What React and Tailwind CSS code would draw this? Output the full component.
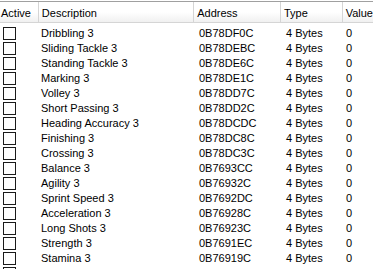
const rows = [
  ["Dribbling 3", "0B78DF0C"],
  ["Sliding Tackle 3", "0B78DEBC"],
  ["Standing Tackle 3", "0B78DE6C"],
  ["Marking 3", "0B78DE1C"],
  ["Volley 3", "0B78DD7C"],
  ["Short Passing 3", "0B78DD2C"],
  ["Heading Accuracy 3", "0B78DCDC"],
  ["Finishing 3", "0B78DC8C"],
  ["Crossing 3", "0B78DC3C"],
  ["Balance 3", "0B7693CC"],
  ["Agility 3", "0B76932C"],
  ["Sprint Speed 3", "0B7692DC"],
  ["Acceleration 3", "0B76928C"],
  ["Long Shots 3", "0B76923C"],
  ["Strength 3", "0B7691EC"],
  ["Stamina 3", "0B76919C"],
];

function HeaderCell({ w, children, last }) {
  return (
    <div
      className={`${w} h-full flex items-center pl-[3px] pt-[3px] ${last ? "" : "border-r border-[#d5d5d5]"}`}
    >
      {children}
    </div>
  );
}

function CheckBox() {
  return (
    <div className="w-[39px] pl-[3px] pt-[1px]">
      <div className="w-[13px] h-[13px] border border-[#1a1a1a] bg-white" />
    </div>
  );
}

export default function App() {
  return (
    <div
      className="w-[373px] h-[269px] bg-white overflow-hidden text-[11px] text-black"
      style={{ fontFamily: "'Liberation Sans', Arial, sans-serif" }}
    >
      {/* top edge */}
      <div className="h-[1px]" />
      <div className="h-[1px] bg-[#a0a0a0]" />

      {/* column header */}
      <div className="flex h-[21px] bg-gradient-to-b from-white via-white to-[#f0f0f0] border-b border-[#d5d5d5]">
        <HeaderCell w="w-[39px] !pl-[1px]">Active</HeaderCell>
        <HeaderCell w="w-[156px]">Description</HeaderCell>
        <HeaderCell w="w-[87px]">Address</HeaderCell>
        <HeaderCell w="w-[62px]">Type</HeaderCell>
        <HeaderCell w="flex-1" last>Value</HeaderCell>
      </div>

      {/* rows */}
      <div className="pt-[3px]">
        {rows.map(([desc, addr]) => (
          <div key={addr} className="flex h-[15px] leading-[15px]">
            <CheckBox />
            <div className="w-[156px] pl-[2px] whitespace-nowrap">{desc}</div>
            <div className="w-[87px] pl-[4px]">{addr}</div>
            <div className="w-[62px] pl-[4px]">4 Bytes</div>
            <div className="flex-1 pl-[2px]">0</div>
          </div>
        ))}
        {/* next row, scrolled out of view */}
        <div className="flex h-[15px]">
          <CheckBox />
        </div>
      </div>
    </div>
  );
}
